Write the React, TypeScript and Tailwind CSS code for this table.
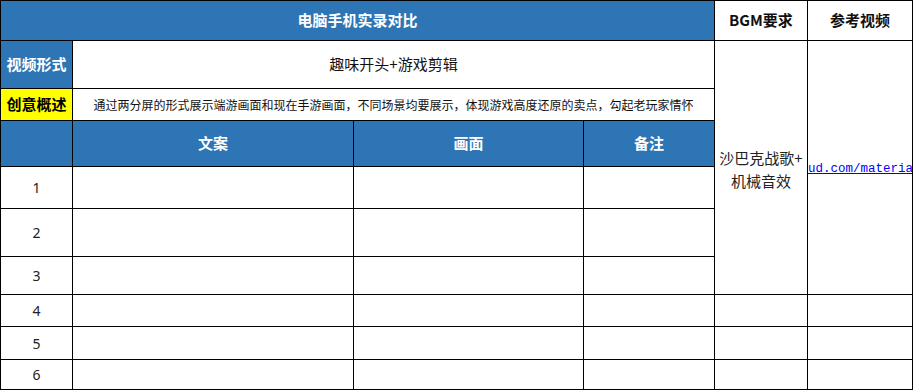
const cjk = { fontFamily: '"Noto Sans CJK SC", "Noto Sans", sans-serif' };
const num = { fontFamily: '"Noto Sans", "Open Sans", sans-serif' };

function Cell({
  className = "",
  children,
}: {
  className?: string;
  children?: React.ReactNode;
}) {
  return (
    <div
      className={`border-r border-b border-black flex items-center justify-center overflow-hidden ${className}`}
    >
      {children}
    </div>
  );
}

export default function App() {
  const rows = ["1", "2", "3"];
  const lower = ["4", "5", "6"];

  return (
    <div className="w-[913px] h-[390px] bg-white overflow-hidden" style={cjk}>
      <div className="grid grid-cols-[72px_281px_230px_131px_93px_105px] grid-rows-[40px_48px_32px_46px_42px_48px_38px_32px_33px_30px] border-t border-l border-black">
        {/* title row */}
        <Cell className="col-span-4 bg-[#2e75b6] text-white font-bold text-[15px]">
          电脑手机实录对比
        </Cell>
        <Cell className="font-bold text-[15px] text-[#111]">BGM要求</Cell>
        <Cell className="font-bold text-[15px] text-[#111]">参考视频</Cell>

        {/* 视频形式 */}
        <Cell className="bg-[#2e75b6] text-white font-bold text-[15px]">视频形式</Cell>
        <Cell className="col-span-3 text-[15px] text-[#111]">趣味开头+游戏剪辑</Cell>
        <Cell className="row-span-6 text-[15px] leading-[23px] text-[#222] text-center">
          <div className="pt-[2px]">
            沙巴克战歌+
            <br />
            机械音效
          </div>
        </Cell>
        <Cell className="row-span-6 justify-start">
          <span
            className="whitespace-nowrap text-[12.5px] text-[#0000ff] underline pt-[4px]"
            style={{ fontFamily: '"Liberation Mono", monospace' }}
          >
            ud.com/materia
          </span>
        </Cell>

        {/* 创意概述 */}
        <Cell className="bg-[#ffff00] text-black font-bold text-[15px]">创意概述</Cell>
        <Cell className="col-span-3 text-[12px] text-[#111]">
          通过两分屏的形式展示端游画面和现在手游画面，不同场景均要展示，体现游戏高度还原的卖点，勾起老玩家情怀
        </Cell>

        {/* column header */}
        <Cell className="bg-[#2e75b6]" />
        <Cell className="bg-[#2e75b6] text-white font-bold text-[15px]">文案</Cell>
        <Cell className="bg-[#2e75b6] text-white font-bold text-[15px]">画面</Cell>
        <Cell className="bg-[#2e75b6] text-white font-bold text-[15px]">备注</Cell>

        {rows.map((n) => (
          <div key={n} className="contents">
            <Cell className="text-[14px] text-[#222]">
              <span style={num}>{n}</span>
            </Cell>
            <Cell />
            <Cell />
            <Cell />
          </div>
        ))}

        {lower.map((n) => (
          <div key={n} className="contents">
            <Cell className="text-[14px] text-[#222]">
              <span style={num}>{n}</span>
            </Cell>
            <Cell />
            <Cell />
            <Cell />
            <Cell />
            <Cell />
          </div>
        ))}
      </div>
    </div>
  );
}
